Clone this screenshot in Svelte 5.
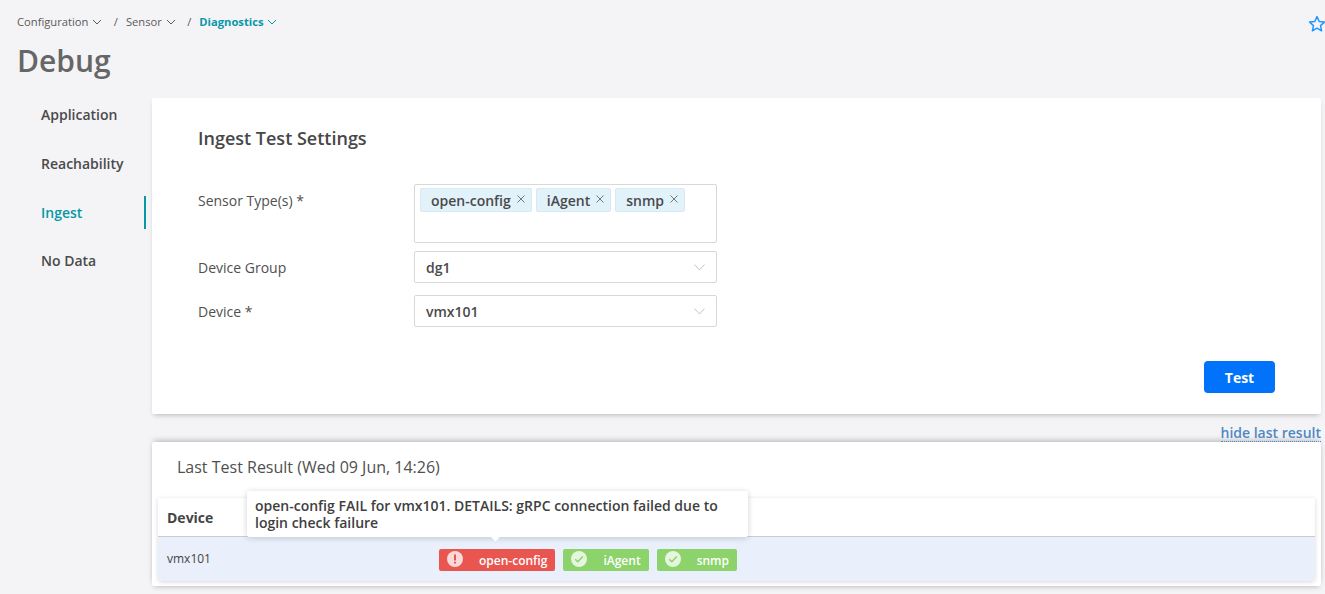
<script>
  const crumbs = [
    { label: 'Configuration', active: false },
    { label: 'Sensor', active: false },
    { label: 'Diagnostics', active: true }
  ];
  const navItems = ['Application', 'Reachability', 'Ingest', 'No Data'];
  const sensorTypes = ['open-config', 'iAgent', 'snmp'];
  const results = [
    { name: 'open-config', ok: false },
    { name: 'iAgent', ok: true },
    { name: 'snmp', ok: true }
  ];
</script>

<div class="page">
  <header class="top">
    <nav class="crumbs">
      {#each crumbs as crumb, i}
        {#if i > 0}<span class="slash">/</span>{/if}
        <span class="crumb" class:active={crumb.active}>
          {crumb.label}
          <svg width="10" height="6" viewBox="0 0 10 6"><path d="M1 1l4 4 4-4" fill="none" stroke="currentColor" stroke-width="1"/></svg>
        </span>
      {/each}
    </nav>
    <svg class="star" width="18" height="18" viewBox="0 0 18 18"><path d="M9 1.6l2.2 4.9 5.2.6-3.9 3.5 1.1 5.2L9 13.2l-4.6 2.6 1.1-5.2-3.9-3.5 5.2-.6z" fill="none" stroke="#1e96ff" stroke-width="1.5" stroke-linejoin="round"/></svg>
  </header>
  <h1>Debug</h1>

  <div class="body">
    <aside class="side">
      {#each navItems as item}
        <div class="nav-item" class:current={item === 'Ingest'}>{item}</div>
      {/each}
    </aside>

    <main class="content">
      <section class="card settings">
        <h2>Ingest Test Settings</h2>
        <div class="form">
          <div class="label">Sensor Type(s) *</div>
          <div class="multi">
            {#each sensorTypes as t}
              <span class="tag">{t}<svg width="8" height="8" viewBox="0 0 8 8"><path d="M.5.5l7 7M7.5.5l-7 7" stroke="#777" stroke-width="1"/></svg></span>
            {/each}
          </div>
          <div class="label">Device Group</div>
          <div class="select">dg1<svg width="11" height="7" viewBox="0 0 11 7"><path d="M.5.5L5.5 6 10.5.5" fill="none" stroke="#c4c4c4" stroke-width="1"/></svg></div>
          <div class="label last">Device *</div>
          <div class="select last">vmx101<svg width="11" height="7" viewBox="0 0 11 7"><path d="M.5.5L5.5 6 10.5.5" fill="none" stroke="#c4c4c4" stroke-width="1"/></svg></div>
        </div>
        <div class="actions"><button>Test</button></div>
      </section>

      <div class="link-row"><span class="hide-link">hide last result</span></div>

      <section class="card result">
        <h3>Last Test Result (Wed 09 Jun, 14:26)</h3>
        <div class="table">
          <div class="thead">Device</div>
          <div class="row">
            <span class="device">vmx101</span>
            <div class="badges">
              {#each results as r}
                <span class="badge" class:fail={!r.ok}>
                  <svg width="16" height="16" viewBox="0 0 16 16">
                    <circle cx="8" cy="8" r="8" fill="#fff" opacity=".78"/>
                    {#if r.ok}
                      <path d="M4.2 8.2l2.6 2.6 5-5.2" fill="none" stroke="#8bd36a" stroke-width="1.5"/>
                    {:else}
                      <path d="M8 3.5v6M8 10.8v1.8" stroke="#e9554f" stroke-width="2"/>
                    {/if}
                  </svg>
                  <span>{r.name}</span>
                </span>
              {/each}
              <div class="tooltip">open-config FAIL for vmx101. DETAILS: gRPC connection failed due to login check failure</div>
            </div>
          </div>
        </div>
      </section>
    </main>
  </div>
</div>

<style>
  :global(body) {
    margin: 0;
    background: #f4f4f7;
    overflow: hidden;
  }
  .page {
    height: 594px;
    overflow: hidden;
    font-family: "Open Sans", "Noto Sans", sans-serif;
    color: #444;
  }
  .top {
    display: flex;
    justify-content: space-between;
    padding: 13px 0 0 17px;
    height: 30px;
    box-sizing: border-box;
  }
  .crumbs {
    display: flex;
    align-items: center;
    height: 16px;
    font-size: 11.2px;
    color: #5a5a5a;
  }
  .crumb svg {
    margin-left: 1px;
    vertical-align: 1px;
  }
  .slash {
    margin: 0 8px 0 11.5px;
  }
  .crumb.active {
    color: #0798a8;
    font-weight: 700;
  }
  .star {
    margin: 2px -1px 0 0;
  }
  h1 {
    margin: 0 0 0 17px;
    height: 68px;
    font-size: 30px;
    line-height: 62px;
    font-weight: 600;
    color: #666;
  }
  .body {
    display: flex;
  }
  .side {
    width: 152px;
    flex: none;
    box-sizing: border-box;
  }
  .nav-item {
    height: 33px;
    margin: 0 6px 15.8px 0;
    padding-left: 41px;
    font-size: 14px;
    font-weight: 600;
    line-height: 33px;
    color: #4a4a4a;
  }
  .nav-item.current {
    color: #0798a8;
    border-right: 2px solid #0798a8;
  }
  .content {
    width: 1169px;
    flex: none;
  }
  .card {
    background: #fff;
    border-radius: 2px;
  }
  .settings {
    height: 316px;
    box-sizing: border-box;
    padding: 28px 46px 0 46px;
    box-shadow: 0 3px 5px -2px rgba(0, 0, 0, 0.25);
  }
  h2 {
    margin: 0 0 34px 0;
    font-size: 18px;
    line-height: 24px;
    font-weight: 600;
    color: #474747;
  }
  .form {
    display: grid;
    grid-template-columns: 216px 303px;
    row-gap: 8px;
    font-size: 14px;
  }
  .label {
    height: 32px;
    line-height: 34px;
    color: #505050;
  }
  .last {
    margin-top: 4px;
  }
  .multi {
    height: 59px;
    box-sizing: border-box;
    border: 1px solid #d8d8d8;
    border-radius: 2px;
    padding: 3px 5px;
    display: flex;
    align-items: flex-start;
    gap: 4px;
  }
  .tag {
    display: flex;
    align-items: center;
    height: 24px;
    box-sizing: border-box;
    padding: 0 6px 0 10px;
    gap: 6px;
    background: #e1f2fb;
    border: 1px solid #d9e9f1;
    border-radius: 2px;
    font-size: 14px;
    font-weight: 600;
    color: #4a4a4a;
  }
  .tag svg {
    margin-top: -2px;
  }
  .select {
    height: 32px;
    box-sizing: border-box;
    border: 1px solid #d8d8d8;
    border-radius: 2px;
    padding: 0 11px;
    display: flex;
    justify-content: space-between;
    align-items: center;
    font-weight: 600;
    color: #4a4a4a;
  }
  .actions {
    display: flex;
    justify-content: flex-end;
    margin-top: 34px;
  }
  button {
    width: 71px;
    height: 32px;
    border: 0;
    border-radius: 4px;
    background: #0073fa;
    color: #fff;
    font: 700 14px "Open Sans", sans-serif;
  }
  .link-row {
    height: 28px;
    display: flex;
    justify-content: flex-end;
    align-items: flex-end;
  }
  .hide-link {
    font-size: 14px;
    font-weight: 600;
    line-height: 17px;
    color: #4f88c4;
    border-bottom: 1px dotted #4f88c4;
  }
  .result {
    height: 144px;
    box-sizing: border-box;
    padding: 13px 6px 0 6px;
    box-shadow: 0 -3px 6px -2px rgba(0, 0, 0, 0.28), 0 3px 5px -2px rgba(0, 0, 0, 0.2);
  }
  h3 {
    margin: 0 0 19px 19px;
    font-size: 16px;
    line-height: 24px;
    font-weight: 400;
    color: #505050;
  }
  .table {
    border-radius: 0 0 4px 4px;
    box-shadow: 0 1px 4px rgba(0, 0, 0, 0.16);
  }
  .thead {
    height: 38px;
    line-height: 40px;
    padding-left: 9px;
    font-size: 14px;
    font-weight: 700;
    border-bottom: 1px solid #c9ccd3;
  }
  .row {
    height: 44px;
    background: #e9f0fb;
    border-radius: 0 0 4px 4px;
    display: flex;
    align-items: center;
    padding-left: 9px;
    font-size: 12px;
    font-weight: 500;
    color: #444;
  }
  .device {
    width: 272px;
    padding-bottom: 2px;
  }
  .badges {
    position: relative;
    display: flex;
    gap: 8px;
    margin-top: 2px;
  }
  .badge {
    height: 22px;
    display: flex;
    align-items: center;
    padding: 0 8px;
    gap: 16px;
    border-radius: 2px;
    background: #8bd36a;
    color: #fff;
    font-size: 12px;
    font-weight: 600;
    box-sizing: border-box;
  }
  .badge svg {
    margin-top: -3px;
  }
  .badge.fail {
    background: #e9554f;
  }
  .tooltip {
    position: absolute;
    left: -192px;
    bottom: 34px;
    width: 501px;
    box-sizing: border-box;
    padding: 6px 8px;
    background: #fff;
    border-radius: 2px;
    box-shadow: 0 1px 6px rgba(0, 0, 0, 0.18);
    font-size: 14px;
    line-height: 17px;
    font-weight: 600;
    color: #404040;
  }
  .tooltip::after {
    content: "";
    position: absolute;
    left: 245px;
    bottom: -3px;
    width: 7px;
    height: 7px;
    background: #fff;
    transform: rotate(45deg);
  }
</style>
